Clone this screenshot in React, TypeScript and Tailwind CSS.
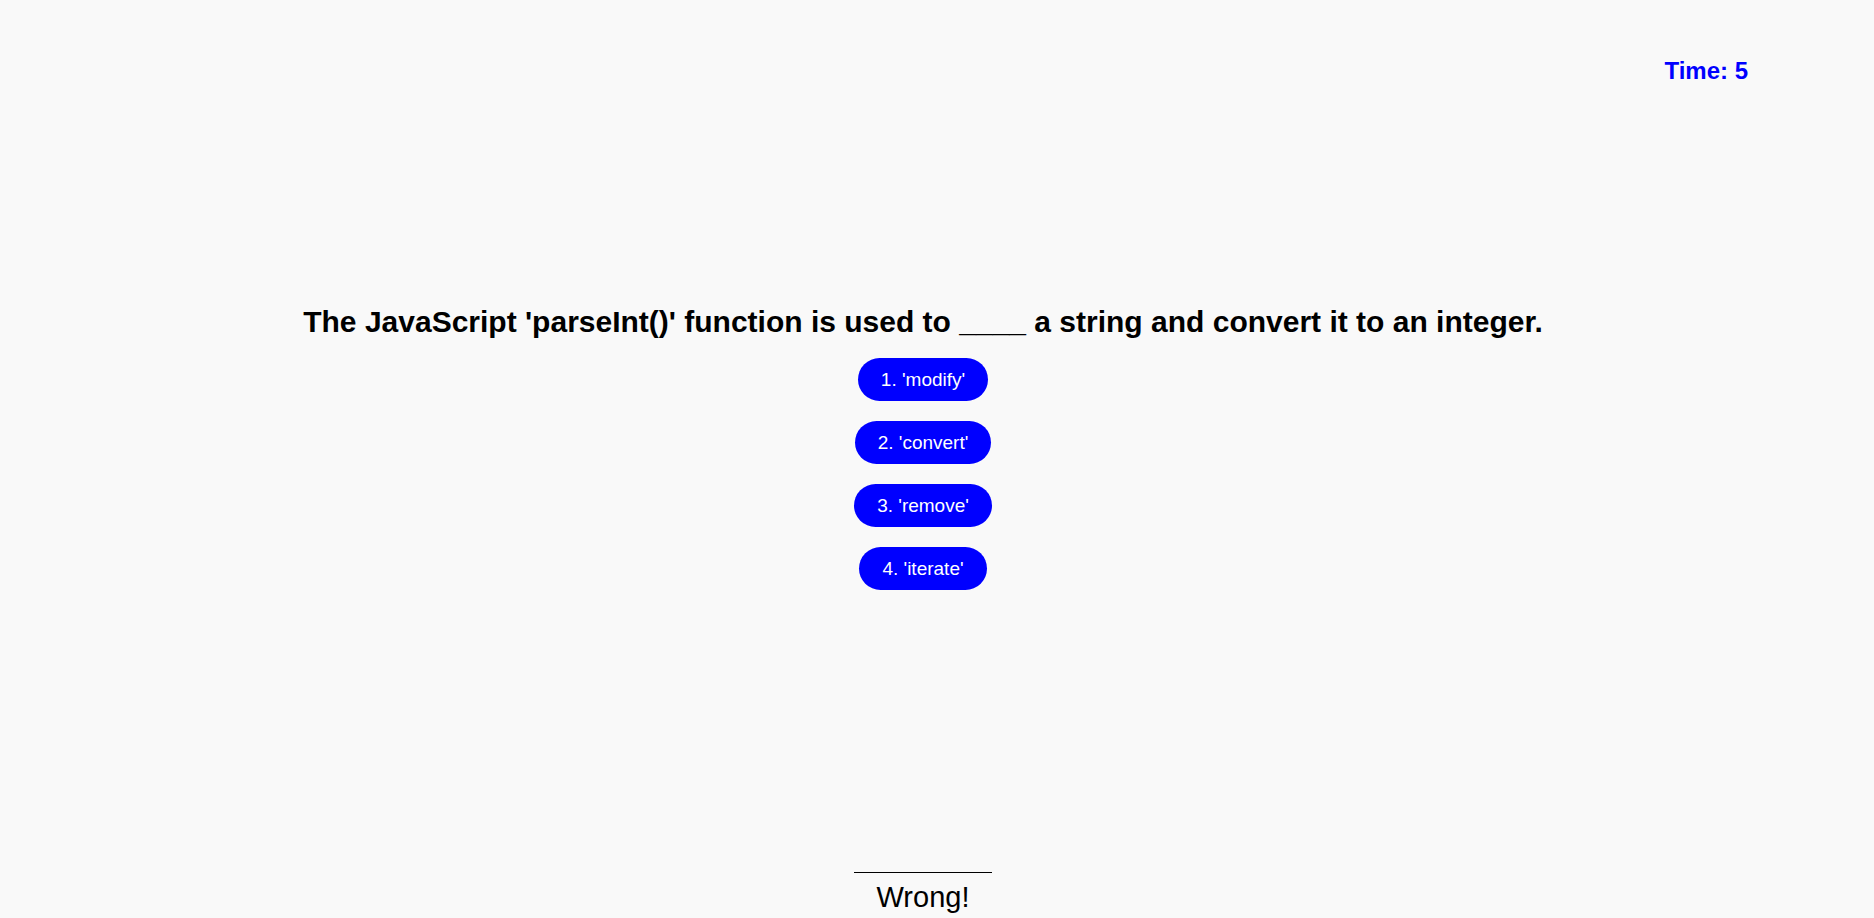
const choices = ["1. 'modify'", "2. 'convert'", "3. 'remove'", "4. 'iterate'"]

export default function App() {
  return (
    <div className="min-h-[918px] bg-[#f9f9f9] font-['Liberation_Sans',Arial,sans-serif] text-black overflow-hidden">
      <header className="flex justify-end pt-[57px] pr-[126px]">
        <p className="text-[24px] leading-[28px] font-bold text-[#0000ff]">Time: 5</p>
      </header>

      <main className="flex flex-col items-center pr-[28px] mt-[219px]">
        <h2 className="text-[30px] leading-[36px] font-bold">
          The JavaScript 'parseInt()' function is used to ____ a string and convert it to an integer.
        </h2>

        <div className="inline-flex flex-col items-center mt-[18px]">
          <div className="flex flex-col items-center gap-5">
            {choices.map((c) => (
              <button
                key={c}
                className="bg-[#0000ff] text-white text-[19px] leading-[23px] px-[23px] py-[10px] rounded-full"
              >
                {c}
              </button>
            ))}
          </div>

          <div className="w-full mt-[282px] border-t border-black pt-2 text-center">
            <p className="text-[29px] leading-[33px]">Wrong!</p>
          </div>
        </div>
      </main>
    </div>
  )
}
